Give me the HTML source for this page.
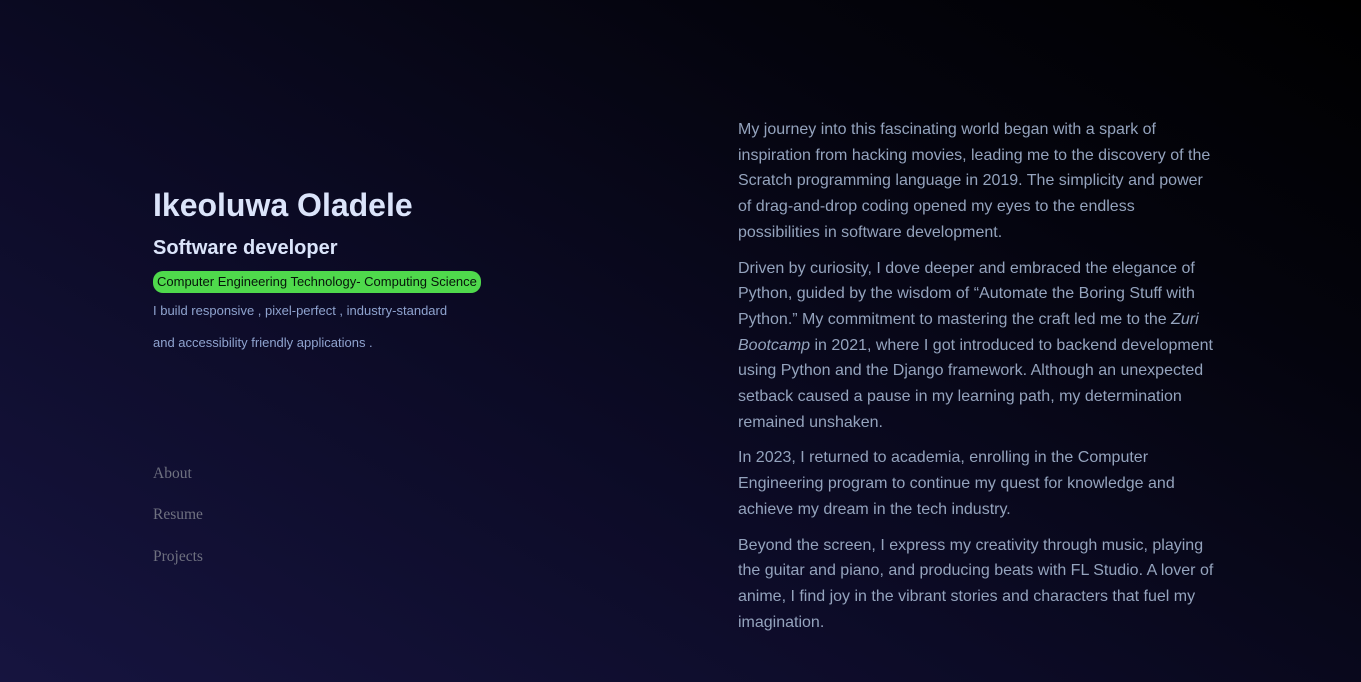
<!DOCTYPE html>
<html><head><meta charset="utf-8"><style>
html,body{margin:0;padding:0;width:1361px;height:682px;overflow:hidden}
body{background:linear-gradient(30deg,#16143f 0%,#0c0b26 40%,#04040d 75%,#000 100%);font-family:"Liberation Sans",sans-serif;position:relative}
h1{position:absolute;left:153px;top:187px;margin:0;font-size:32px;font-weight:bold;color:#dbe4fa;white-space:nowrap}
h2{position:absolute;left:153px;top:237px;margin:0;font-size:20px;font-weight:bold;color:#dbe4fa;white-space:nowrap}
.badge{position:absolute;left:153px;top:271px;height:22px;line-height:22px;padding:0 4px;background:#4fd94c;color:#06150a;border-radius:10px;font-size:13px;white-space:nowrap}
.s{position:absolute;left:153px;font-size:13px;color:#8fa3cf;white-space:nowrap}
.nav{position:absolute;left:153px;font-family:"Liberation Serif",serif;font-size:15.5px;color:#6f7180}
.r{position:absolute;left:738px;top:117px;width:482px;font-size:16px;line-height:25.7px;color:#94a3bd}
.r p{margin:0 0 10px}
</style></head><body>
<h1>Ikeoluwa Oladele</h1>
<h2>Software developer</h2>
<div class="badge">Computer Engineering Technology- Computing Science</div>
<div class="s" style="top:303px">I build responsive , pixel-perfect , industry-standard</div>
<div class="s" style="top:335px">and accessibility friendly applications .</div>
<div class="nav" style="top:465px">About</div>
<div class="nav" style="top:506px">Resume</div>
<div class="nav" style="top:548px">Projects</div>
<div class="r">
<p>My journey into this fascinating world began with a spark of inspiration from hacking movies, leading me to the discovery of the Scratch programming language in 2019. The simplicity and power of drag-and-drop coding opened my eyes to the endless possibilities in software development.</p>
<p>Driven by curiosity, I dove deeper and embraced the elegance of Python, guided by the wisdom of “Automate the Boring Stuff with Python.” My commitment to mastering the craft led me to the <i>Zuri Bootcamp</i> in 2021, where I got introduced to backend development using Python and the Django framework. Although an unexpected setback caused a pause in my learning path, my determination remained unshaken.</p>
<p>In 2023, I returned to academia, enrolling in the Computer Engineering program to continue my quest for knowledge and achieve my dream in the tech industry.</p>
<p>Beyond the screen, I express my creativity through music, playing the guitar and piano, and producing beats with FL Studio. A lover of anime, I find joy in the vibrant stories and characters that fuel my imagination.</p>
</div>
</body></html>
